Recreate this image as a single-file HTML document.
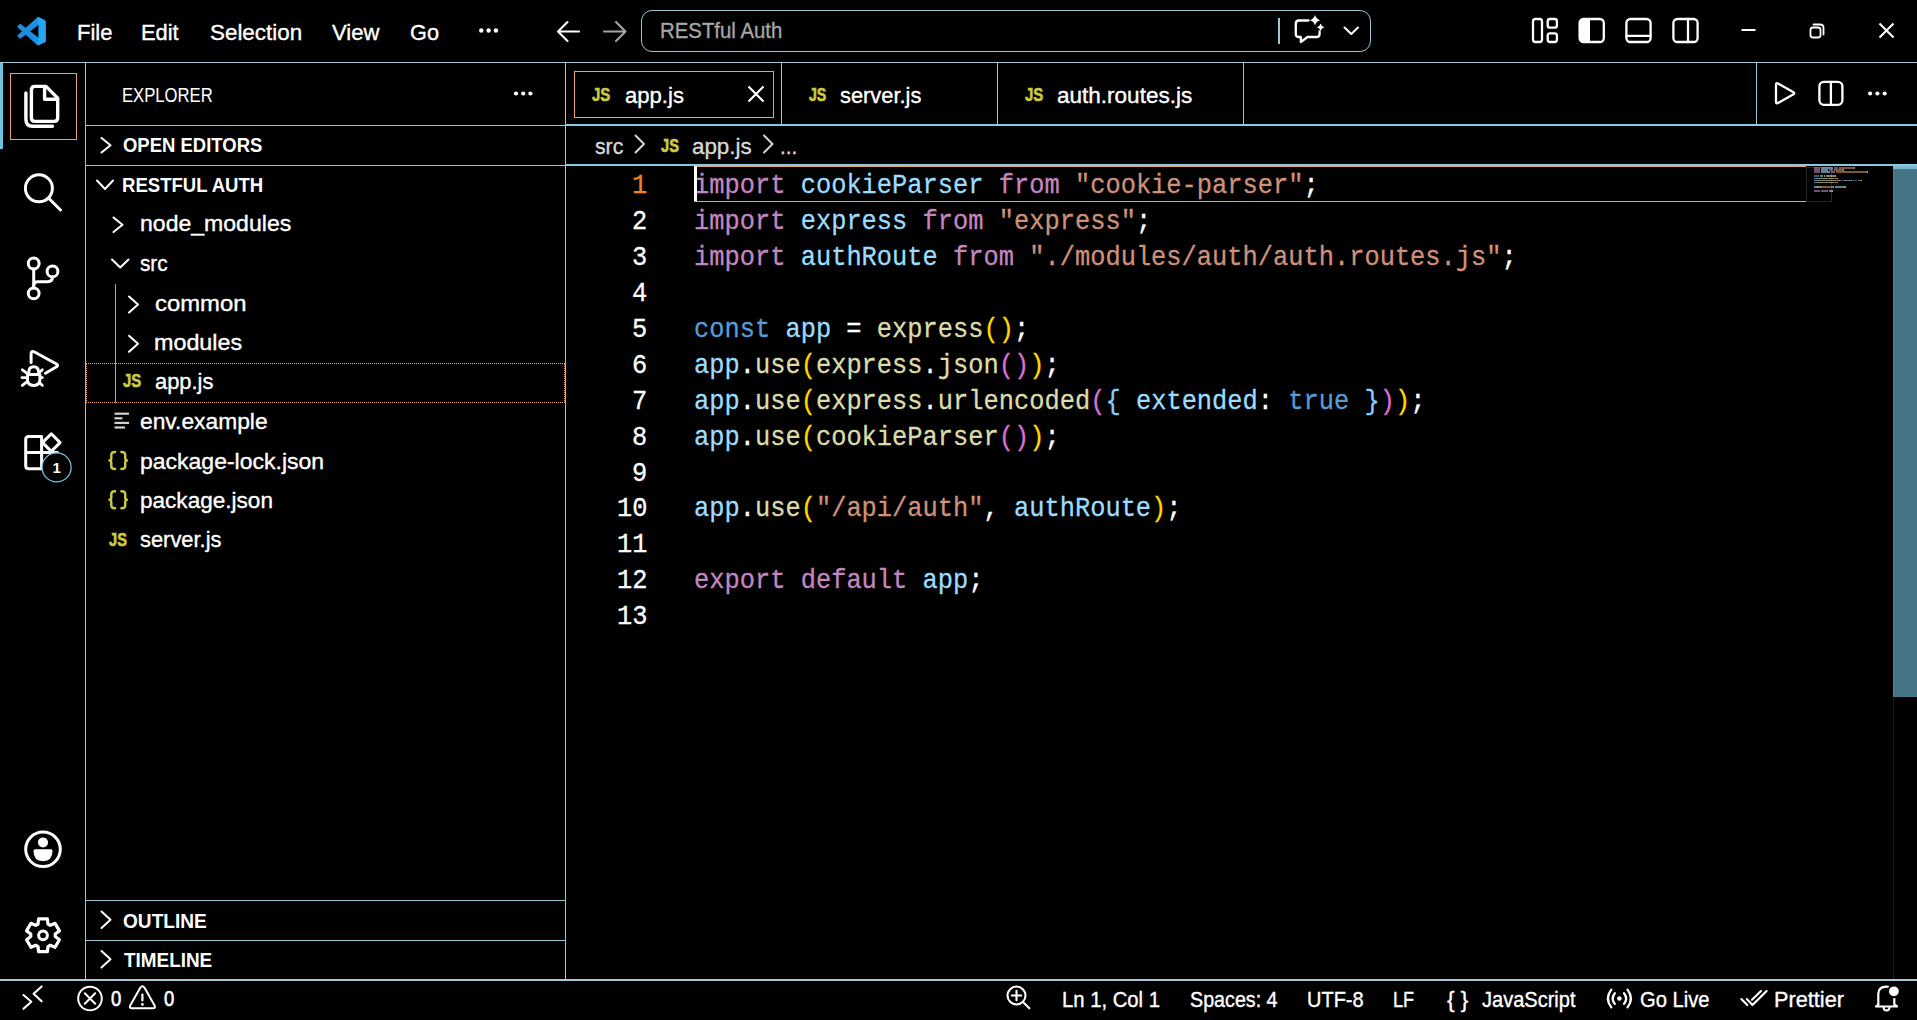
<!DOCTYPE html>
<html><head><meta charset="utf-8"><style>
html,body{margin:0;padding:0;background:#000;width:1917px;height:1020px;overflow:hidden;}
.t{position:absolute;white-space:pre;line-height:0;}
</style></head>
<body>
<div style="position:absolute;left:0px;top:62px;width:1917px;height:1px;background:#9cc6d6;"></div><div class="t" style="left:76.83px;top:32.59px;font-size:22.4px;color:#fff;font-weight:normal;font-family:'Liberation Sans', sans-serif;transform:scaleX(0.9824);transform-origin:0 0;-webkit-text-stroke:0.35px #fff;">File</div><div class="t" style="left:141.43px;top:32.59px;font-size:22.4px;color:#fff;font-weight:normal;font-family:'Liberation Sans', sans-serif;transform:scaleX(0.9763);transform-origin:0 0;-webkit-text-stroke:0.35px #fff;">Edit</div><div class="t" style="left:210.00px;top:32.59px;font-size:22.4px;color:#fff;font-weight:normal;font-family:'Liberation Sans', sans-serif;-webkit-text-stroke:0.35px #fff;">Selection</div><div class="t" style="left:332.40px;top:32.59px;font-size:22.4px;color:#fff;font-weight:normal;font-family:'Liberation Sans', sans-serif;transform:scaleX(0.9857);transform-origin:0 0;-webkit-text-stroke:0.35px #fff;">View</div><div class="t" style="left:410.20px;top:32.59px;font-size:22.4px;color:#fff;font-weight:normal;font-family:'Liberation Sans', sans-serif;transform:scaleX(0.9700);transform-origin:0 0;-webkit-text-stroke:0.35px #fff;">Go</div><div style="position:absolute;left:641px;top:10px;width:730px;height:42px;box-sizing:border-box;border:1px solid #9cc6d6;border-radius:11px;"></div><div class="t" style="left:659.75px;top:31.29px;font-size:22.4px;color:#a6a6a6;font-weight:normal;font-family:'Liberation Sans', sans-serif;transform:scaleX(0.9098);transform-origin:0 0;-webkit-text-stroke:0.35px #a6a6a6;">RESTful Auth</div><div style="position:absolute;left:1278px;top:18px;width:2px;height:26px;background:#9cc6d6;"></div><div style="position:absolute;left:85px;top:63px;width:1px;height:916px;background:#9cc6d6;"></div><div style="position:absolute;left:0px;top:63px;width:3px;height:86px;background:#6FC3DF;"></div><div style="position:absolute;left:10px;top:73px;width:67px;height:67px;box-sizing:border-box;border:1px solid #e9a26a;"></div><div style="position:absolute;left:565px;top:63px;width:1px;height:916px;background:#9cc6d6;"></div><div class="t" style="left:122.15px;top:94.99px;font-size:19.5px;color:#fff;font-weight:normal;font-family:'Liberation Sans', sans-serif;transform:scaleX(0.8538);transform-origin:0 0;-webkit-text-stroke-width:0.05px;">EXPLORER</div><div style="position:absolute;left:86px;top:125px;width:479px;height:1px;background:#9cc6d6;"></div><div class="t" style="left:123.00px;top:144.89px;font-size:19.5px;color:#fff;font-weight:bold;font-family:'Liberation Sans', sans-serif;transform:scaleX(0.9476);transform-origin:0 0;">OPEN EDITORS</div><div style="position:absolute;left:86px;top:165px;width:479px;height:1px;background:#9cc6d6;"></div><div class="t" style="left:122.05px;top:185.39px;font-size:19.5px;color:#fff;font-weight:bold;font-family:'Liberation Sans', sans-serif;transform:scaleX(0.9510);transform-origin:0 0;">RESTFUL AUTH</div><div class="t" style="left:140.19px;top:224.49px;font-size:22.4px;color:#fff;font-weight:normal;font-family:'Liberation Sans', sans-serif;transform:scaleX(1.0295);transform-origin:0 0;-webkit-text-stroke:0.35px #fff;">node_modules</div><div class="t" style="left:140.23px;top:263.59px;font-size:22.4px;color:#fff;font-weight:normal;font-family:'Liberation Sans', sans-serif;transform:scaleX(0.9267);transform-origin:0 0;-webkit-text-stroke:0.35px #fff;">src</div><div class="t" style="left:155.00px;top:303.79px;font-size:22.4px;color:#fff;font-weight:normal;font-family:'Liberation Sans', sans-serif;transform:scaleX(1.0659);transform-origin:0 0;-webkit-text-stroke:0.35px #fff;">common</div><div class="t" style="left:153.96px;top:342.89px;font-size:22.4px;color:#fff;font-weight:normal;font-family:'Liberation Sans', sans-serif;transform:scaleX(1.0417);transform-origin:0 0;-webkit-text-stroke:0.35px #fff;">modules</div><div class="t" style="left:155.00px;top:381.99px;font-size:22.4px;color:#fff;font-weight:normal;font-family:'Liberation Sans', sans-serif;transform:scaleX(0.9767);transform-origin:0 0;-webkit-text-stroke:0.35px #fff;">app.js</div><div class="t" style="left:140.39px;top:422.29px;font-size:22.4px;color:#fff;font-weight:normal;font-family:'Liberation Sans', sans-serif;transform:scaleX(1.0184);transform-origin:0 0;-webkit-text-stroke:0.35px #fff;">env.example</div><div class="t" style="left:140.39px;top:461.79px;font-size:22.4px;color:#fff;font-weight:normal;font-family:'Liberation Sans', sans-serif;transform:scaleX(1.0270);transform-origin:0 0;-webkit-text-stroke:0.35px #fff;">package-lock.json</div><div class="t" style="left:140.40px;top:500.89px;font-size:22.4px;color:#fff;font-weight:normal;font-family:'Liberation Sans', sans-serif;transform:scaleX(1.0076);transform-origin:0 0;-webkit-text-stroke:0.35px #fff;">package.json</div><div class="t" style="left:140.41px;top:540.09px;font-size:22.4px;color:#fff;font-weight:normal;font-family:'Liberation Sans', sans-serif;transform:scaleX(0.9771);transform-origin:0 0;-webkit-text-stroke:0.35px #fff;">server.js</div><div style="position:absolute;left:86px;top:363px;width:479px;height:40px;box-sizing:border-box;border:1px dotted #e9a26a;"></div><div style="position:absolute;left:115px;top:284px;width:1px;height:119px;background:#a8a8a8;"></div><div style="position:absolute;left:86px;top:900px;width:479px;height:1px;background:#9cc6d6;"></div><div class="t" style="left:122.60px;top:920.59px;font-size:19.5px;color:#fff;font-weight:bold;font-family:'Liberation Sans', sans-serif;transform:scaleX(0.9788);transform-origin:0 0;">OUTLINE</div><div style="position:absolute;left:86px;top:940px;width:479px;height:1px;background:#9cc6d6;"></div><div class="t" style="left:123.58px;top:959.59px;font-size:19.5px;color:#fff;font-weight:bold;font-family:'Liberation Sans', sans-serif;transform:scaleX(0.9696);transform-origin:0 0;">TIMELINE</div><div style="position:absolute;left:0px;top:979px;width:1917px;height:2px;background:#a0c8dc;"></div><div class="t" style="left:111.19px;top:999.47px;font-size:21.3px;color:#fff;font-weight:normal;font-family:'Liberation Sans', sans-serif;transform:scaleX(0.8667);transform-origin:0 0;-webkit-text-stroke-width:0.6px;">0</div><div class="t" style="left:163.56px;top:999.47px;font-size:21.3px;color:#fff;font-weight:normal;font-family:'Liberation Sans', sans-serif;transform:scaleX(0.8667);transform-origin:0 0;-webkit-text-stroke-width:0.6px;">0</div><div class="t" style="left:1062.44px;top:999.67px;font-size:21.3px;color:#fff;font-weight:normal;font-family:'Liberation Sans', sans-serif;transform:scaleX(0.9510);transform-origin:0 0;-webkit-text-stroke:0.35px #fff;">Ln 1, Col 1</div><div class="t" style="left:1190.42px;top:999.67px;font-size:21.3px;color:#fff;font-weight:normal;font-family:'Liberation Sans', sans-serif;transform:scaleX(0.9245);transform-origin:0 0;-webkit-text-stroke:0.35px #fff;">Spaces: 4</div><div class="t" style="left:1306.84px;top:999.67px;font-size:21.3px;color:#fff;font-weight:normal;font-family:'Liberation Sans', sans-serif;transform:scaleX(0.9383);transform-origin:0 0;-webkit-text-stroke:0.35px #fff;">UTF-8</div><div class="t" style="left:1392.70px;top:999.67px;font-size:21.3px;color:#fff;font-weight:normal;font-family:'Liberation Sans', sans-serif;transform:scaleX(0.8500);transform-origin:0 0;-webkit-text-stroke:0.35px #fff;">LF</div><div class="t" style="left:1482.19px;top:999.67px;font-size:21.3px;color:#fff;font-weight:normal;font-family:'Liberation Sans', sans-serif;transform:scaleX(0.9400);transform-origin:0 0;-webkit-text-stroke:0.35px #fff;">JavaScript</div><div class="t" style="left:1639.83px;top:999.67px;font-size:21.3px;color:#fff;font-weight:normal;font-family:'Liberation Sans', sans-serif;transform:scaleX(0.9466);transform-origin:0 0;-webkit-text-stroke:0.35px #fff;">Go Live</div><div class="t" style="left:1773.59px;top:999.67px;font-size:21.3px;color:#fff;font-weight:normal;font-family:'Liberation Sans', sans-serif;transform:scaleX(1.0191);transform-origin:0 0;-webkit-text-stroke:0.35px #fff;">Prettier</div><div style="position:absolute;left:566px;top:124px;width:1351px;height:2px;background:#86cbe6;"></div><div style="position:absolute;left:781px;top:63px;width:1px;height:61px;background:#9cc6d6;"></div><div style="position:absolute;left:997px;top:63px;width:1px;height:61px;background:#9cc6d6;"></div><div style="position:absolute;left:1243px;top:63px;width:1px;height:61px;background:#9cc6d6;"></div><div style="position:absolute;left:1756px;top:63px;width:1px;height:61px;background:#9cc6d6;"></div><div style="position:absolute;left:574px;top:71px;width:200px;height:47px;box-sizing:border-box;border:1px solid #e9a26a;"></div><div class="t" style="left:624.60px;top:96.09px;font-size:22.4px;color:#fff;font-weight:normal;font-family:'Liberation Sans', sans-serif;transform:scaleX(0.9867);transform-origin:0 0;-webkit-text-stroke:0.35px #fff;">app.js</div><div class="t" style="left:840.01px;top:96.09px;font-size:22.4px;color:#fff;font-weight:normal;font-family:'Liberation Sans', sans-serif;transform:scaleX(0.9759);transform-origin:0 0;-webkit-text-stroke:0.35px #fff;">server.js</div><div class="t" style="left:1056.60px;top:96.09px;font-size:22.4px;color:#fff;font-weight:normal;font-family:'Liberation Sans', sans-serif;transform:scaleX(1.0059);transform-origin:0 0;-webkit-text-stroke:0.35px #fff;">auth.routes.js</div><div class="t" style="left:595.22px;top:146.59px;font-size:22.4px;color:#d9d9d9;font-weight:normal;font-family:'Liberation Sans', sans-serif;transform:scaleX(0.9483);transform-origin:0 0;-webkit-text-stroke:0.35px #d9d9d9;">src</div><div class="t" style="left:692.40px;top:146.59px;font-size:22.4px;color:#d9d9d9;font-weight:normal;font-family:'Liberation Sans', sans-serif;transform:scaleX(0.9983);transform-origin:0 0;-webkit-text-stroke:0.35px #d9d9d9;">app.js</div><div class="t" style="left:780.10px;top:146.59px;font-size:22.4px;color:#d9d9d9;font-weight:normal;font-family:'Liberation Sans', sans-serif;transform:scaleX(0.9312);transform-origin:0 0;-webkit-text-stroke:0.35px #d9d9d9;">...</div><div style="position:absolute;left:566px;top:164px;width:1351px;height:2px;background:#86cbe6;"></div><div style="position:absolute;left:694px;top:166px;width:1112px;height:1px;background:#e9a26a;"></div><div style="position:absolute;left:694px;top:201px;width:1112px;height:1px;background:#e9a26a;"></div><div class="t" style="left:631.76px;top:185.75px;font-size:27.2px;color:#F38518;font-weight:normal;font-family:'Liberation Mono', monospace;transform:scaleX(0.9338);transform-origin:0 0;-webkit-text-stroke-width:0.3px;">1</div><div class="t" style="left:694.00px;top:185.75px;font-size:27.2px;color:#fff;font-weight:normal;font-family:'Liberation Mono', monospace;transform:scaleX(0.9338);transform-origin:0 0;-webkit-text-stroke-width:0.3px;"><span style="color:#C586C0">import</span><span style="color:#FFFFFF"> </span><span style="color:#9CDCFE">cookieParser</span><span style="color:#FFFFFF"> </span><span style="color:#C586C0">from</span><span style="color:#FFFFFF"> </span><span style="color:#CE9178">"cookie-parser"</span><span style="color:#FFFFFF">;</span></div><div class="t" style="left:631.76px;top:221.72px;font-size:27.2px;color:#FFFFFF;font-weight:normal;font-family:'Liberation Mono', monospace;transform:scaleX(0.9338);transform-origin:0 0;-webkit-text-stroke-width:0.3px;">2</div><div class="t" style="left:694.00px;top:221.72px;font-size:27.2px;color:#fff;font-weight:normal;font-family:'Liberation Mono', monospace;transform:scaleX(0.9338);transform-origin:0 0;-webkit-text-stroke-width:0.3px;"><span style="color:#C586C0">import</span><span style="color:#FFFFFF"> </span><span style="color:#9CDCFE">express</span><span style="color:#FFFFFF"> </span><span style="color:#C586C0">from</span><span style="color:#FFFFFF"> </span><span style="color:#CE9178">"express"</span><span style="color:#FFFFFF">;</span></div><div class="t" style="left:631.76px;top:257.69px;font-size:27.2px;color:#FFFFFF;font-weight:normal;font-family:'Liberation Mono', monospace;transform:scaleX(0.9338);transform-origin:0 0;-webkit-text-stroke-width:0.3px;">3</div><div class="t" style="left:694.00px;top:257.69px;font-size:27.2px;color:#fff;font-weight:normal;font-family:'Liberation Mono', monospace;transform:scaleX(0.9338);transform-origin:0 0;-webkit-text-stroke-width:0.3px;"><span style="color:#C586C0">import</span><span style="color:#FFFFFF"> </span><span style="color:#9CDCFE">authRoute</span><span style="color:#FFFFFF"> </span><span style="color:#C586C0">from</span><span style="color:#FFFFFF"> </span><span style="color:#CE9178">"./modules/auth/auth.routes.js"</span><span style="color:#FFFFFF">;</span></div><div class="t" style="left:631.76px;top:293.66px;font-size:27.2px;color:#FFFFFF;font-weight:normal;font-family:'Liberation Mono', monospace;transform:scaleX(0.9338);transform-origin:0 0;-webkit-text-stroke-width:0.3px;">4</div><div class="t" style="left:631.76px;top:329.63px;font-size:27.2px;color:#FFFFFF;font-weight:normal;font-family:'Liberation Mono', monospace;transform:scaleX(0.9338);transform-origin:0 0;-webkit-text-stroke-width:0.3px;">5</div><div class="t" style="left:694.00px;top:329.63px;font-size:27.2px;color:#fff;font-weight:normal;font-family:'Liberation Mono', monospace;transform:scaleX(0.9338);transform-origin:0 0;-webkit-text-stroke-width:0.3px;"><span style="color:#569CD6">const</span><span style="color:#FFFFFF"> </span><span style="color:#9CDCFE">app</span><span style="color:#FFFFFF"> = </span><span style="color:#DCDCAA">express</span><span style="color:#FFD700">()</span><span style="color:#FFFFFF">;</span></div><div class="t" style="left:631.76px;top:365.60px;font-size:27.2px;color:#FFFFFF;font-weight:normal;font-family:'Liberation Mono', monospace;transform:scaleX(0.9338);transform-origin:0 0;-webkit-text-stroke-width:0.3px;">6</div><div class="t" style="left:694.00px;top:365.60px;font-size:27.2px;color:#fff;font-weight:normal;font-family:'Liberation Mono', monospace;transform:scaleX(0.9338);transform-origin:0 0;-webkit-text-stroke-width:0.3px;"><span style="color:#9CDCFE">app</span><span style="color:#FFFFFF">.</span><span style="color:#DCDCAA">use</span><span style="color:#FFD700">(</span><span style="color:#DCDCAA">express</span><span style="color:#FFFFFF">.</span><span style="color:#DCDCAA">json</span><span style="color:#DA70D6">()</span><span style="color:#FFD700">)</span><span style="color:#FFFFFF">;</span></div><div class="t" style="left:631.76px;top:401.57px;font-size:27.2px;color:#FFFFFF;font-weight:normal;font-family:'Liberation Mono', monospace;transform:scaleX(0.9338);transform-origin:0 0;-webkit-text-stroke-width:0.3px;">7</div><div class="t" style="left:694.00px;top:401.57px;font-size:27.2px;color:#fff;font-weight:normal;font-family:'Liberation Mono', monospace;transform:scaleX(0.9338);transform-origin:0 0;-webkit-text-stroke-width:0.3px;"><span style="color:#9CDCFE">app</span><span style="color:#FFFFFF">.</span><span style="color:#DCDCAA">use</span><span style="color:#FFD700">(</span><span style="color:#DCDCAA">express</span><span style="color:#FFFFFF">.</span><span style="color:#DCDCAA">urlencoded</span><span style="color:#DA70D6">(</span><span style="color:#87CEFA">{</span><span style="color:#FFFFFF"> </span><span style="color:#9CDCFE">extended</span><span style="color:#FFFFFF">:</span><span style="color:#FFFFFF"> </span><span style="color:#569CD6">true</span><span style="color:#FFFFFF"> </span><span style="color:#87CEFA">}</span><span style="color:#DA70D6">)</span><span style="color:#FFD700">)</span><span style="color:#FFFFFF">;</span></div><div class="t" style="left:631.76px;top:437.54px;font-size:27.2px;color:#FFFFFF;font-weight:normal;font-family:'Liberation Mono', monospace;transform:scaleX(0.9338);transform-origin:0 0;-webkit-text-stroke-width:0.3px;">8</div><div class="t" style="left:694.00px;top:437.54px;font-size:27.2px;color:#fff;font-weight:normal;font-family:'Liberation Mono', monospace;transform:scaleX(0.9338);transform-origin:0 0;-webkit-text-stroke-width:0.3px;"><span style="color:#9CDCFE">app</span><span style="color:#FFFFFF">.</span><span style="color:#DCDCAA">use</span><span style="color:#FFD700">(</span><span style="color:#DCDCAA">cookieParser</span><span style="color:#DA70D6">()</span><span style="color:#FFD700">)</span><span style="color:#FFFFFF">;</span></div><div class="t" style="left:631.76px;top:473.51px;font-size:27.2px;color:#FFFFFF;font-weight:normal;font-family:'Liberation Mono', monospace;transform:scaleX(0.9338);transform-origin:0 0;-webkit-text-stroke-width:0.3px;">9</div><div class="t" style="left:616.52px;top:509.48px;font-size:27.2px;color:#FFFFFF;font-weight:normal;font-family:'Liberation Mono', monospace;transform:scaleX(0.9338);transform-origin:0 0;-webkit-text-stroke-width:0.3px;">10</div><div class="t" style="left:694.00px;top:509.48px;font-size:27.2px;color:#fff;font-weight:normal;font-family:'Liberation Mono', monospace;transform:scaleX(0.9338);transform-origin:0 0;-webkit-text-stroke-width:0.3px;"><span style="color:#9CDCFE">app</span><span style="color:#FFFFFF">.</span><span style="color:#DCDCAA">use</span><span style="color:#FFD700">(</span><span style="color:#CE9178">"/api/auth"</span><span style="color:#FFFFFF">, </span><span style="color:#9CDCFE">authRoute</span><span style="color:#FFD700">)</span><span style="color:#FFFFFF">;</span></div><div class="t" style="left:616.52px;top:545.45px;font-size:27.2px;color:#FFFFFF;font-weight:normal;font-family:'Liberation Mono', monospace;transform:scaleX(0.9338);transform-origin:0 0;-webkit-text-stroke-width:0.3px;">11</div><div class="t" style="left:616.52px;top:581.42px;font-size:27.2px;color:#FFFFFF;font-weight:normal;font-family:'Liberation Mono', monospace;transform:scaleX(0.9338);transform-origin:0 0;-webkit-text-stroke-width:0.3px;">12</div><div class="t" style="left:694.00px;top:581.42px;font-size:27.2px;color:#fff;font-weight:normal;font-family:'Liberation Mono', monospace;transform:scaleX(0.9338);transform-origin:0 0;-webkit-text-stroke-width:0.3px;"><span style="color:#C586C0">export</span><span style="color:#FFFFFF"> </span><span style="color:#C586C0">default</span><span style="color:#FFFFFF"> </span><span style="color:#9CDCFE">app</span><span style="color:#FFFFFF">;</span></div><div class="t" style="left:616.52px;top:617.39px;font-size:27.2px;color:#FFFFFF;font-weight:normal;font-family:'Liberation Mono', monospace;transform:scaleX(0.9338);transform-origin:0 0;-webkit-text-stroke-width:0.3px;">13</div><div style="position:absolute;left:694px;top:166px;width:3px;height:35px;background:#ffffff;"></div><div style="position:absolute;left:1893px;top:167px;width:24px;height:530px;background:#457688;"></div><div style="position:absolute;left:1893px;top:167px;width:1px;height:530px;background:#5b7f8e;"></div><div style="position:absolute;left:1893px;top:697px;width:1px;height:282px;background:#1c1c1c;"></div><div style="position:absolute;left:1893px;top:166px;width:24px;height:3px;background:#7fb8cc;"></div><div style="position:absolute;left:1806px;top:167px;width:26px;height:35px;background:transparent;box-sizing:border-box;border:1px solid #262626;"></div><div style="position:absolute;left:1814.0px;top:167.0px;width:6.0px;height:1.8px;background:#C586C0;opacity:0.6;"></div><div style="position:absolute;left:1821.0px;top:167.0px;width:12.0px;height:1.8px;background:#9CDCFE;opacity:0.6;"></div><div style="position:absolute;left:1834.0px;top:167.0px;width:4.0px;height:1.8px;background:#C586C0;opacity:0.6;"></div><div style="position:absolute;left:1839.0px;top:167.0px;width:15.0px;height:1.8px;background:#CE9178;opacity:0.6;"></div><div style="position:absolute;left:1854.0px;top:167.0px;width:1.0px;height:1.8px;background:#FFFFFF;opacity:0.6;"></div><div style="position:absolute;left:1814.0px;top:169.1px;width:6.0px;height:1.8px;background:#C586C0;opacity:0.6;"></div><div style="position:absolute;left:1821.0px;top:169.1px;width:7.0px;height:1.8px;background:#9CDCFE;opacity:0.6;"></div><div style="position:absolute;left:1829.0px;top:169.1px;width:4.0px;height:1.8px;background:#C586C0;opacity:0.6;"></div><div style="position:absolute;left:1834.0px;top:169.1px;width:9.0px;height:1.8px;background:#CE9178;opacity:0.6;"></div><div style="position:absolute;left:1843.0px;top:169.1px;width:1.0px;height:1.8px;background:#FFFFFF;opacity:0.6;"></div><div style="position:absolute;left:1814.0px;top:171.2px;width:6.0px;height:1.8px;background:#C586C0;opacity:0.6;"></div><div style="position:absolute;left:1821.0px;top:171.2px;width:9.0px;height:1.8px;background:#9CDCFE;opacity:0.6;"></div><div style="position:absolute;left:1831.0px;top:171.2px;width:4.0px;height:1.8px;background:#C586C0;opacity:0.6;"></div><div style="position:absolute;left:1836.0px;top:171.2px;width:31.0px;height:1.8px;background:#CE9178;opacity:0.6;"></div><div style="position:absolute;left:1867.0px;top:171.2px;width:1.0px;height:1.8px;background:#FFFFFF;opacity:0.6;"></div><div style="position:absolute;left:1814.0px;top:175.4px;width:5.0px;height:1.8px;background:#569CD6;opacity:0.6;"></div><div style="position:absolute;left:1820.0px;top:175.4px;width:3.0px;height:1.8px;background:#9CDCFE;opacity:0.6;"></div><div style="position:absolute;left:1824.0px;top:175.4px;width:1.0px;height:1.8px;background:#FFFFFF;opacity:0.6;"></div><div style="position:absolute;left:1826.0px;top:175.4px;width:7.0px;height:1.8px;background:#DCDCAA;opacity:0.6;"></div><div style="position:absolute;left:1833.0px;top:175.4px;width:2.0px;height:1.8px;background:#FFD700;opacity:0.6;"></div><div style="position:absolute;left:1835.0px;top:175.4px;width:1.0px;height:1.8px;background:#FFFFFF;opacity:0.6;"></div><div style="position:absolute;left:1814.0px;top:177.5px;width:3.0px;height:1.8px;background:#9CDCFE;opacity:0.6;"></div><div style="position:absolute;left:1817.0px;top:177.5px;width:1.0px;height:1.8px;background:#FFFFFF;opacity:0.6;"></div><div style="position:absolute;left:1818.0px;top:177.5px;width:3.0px;height:1.8px;background:#DCDCAA;opacity:0.6;"></div><div style="position:absolute;left:1821.0px;top:177.5px;width:1.0px;height:1.8px;background:#FFD700;opacity:0.6;"></div><div style="position:absolute;left:1822.0px;top:177.5px;width:7.0px;height:1.8px;background:#DCDCAA;opacity:0.6;"></div><div style="position:absolute;left:1829.0px;top:177.5px;width:1.0px;height:1.8px;background:#FFFFFF;opacity:0.6;"></div><div style="position:absolute;left:1830.0px;top:177.5px;width:4.0px;height:1.8px;background:#DCDCAA;opacity:0.6;"></div><div style="position:absolute;left:1834.0px;top:177.5px;width:2.0px;height:1.8px;background:#DA70D6;opacity:0.6;"></div><div style="position:absolute;left:1836.0px;top:177.5px;width:1.0px;height:1.8px;background:#FFD700;opacity:0.6;"></div><div style="position:absolute;left:1837.0px;top:177.5px;width:1.0px;height:1.8px;background:#FFFFFF;opacity:0.6;"></div><div style="position:absolute;left:1814.0px;top:179.6px;width:3.0px;height:1.8px;background:#9CDCFE;opacity:0.6;"></div><div style="position:absolute;left:1817.0px;top:179.6px;width:1.0px;height:1.8px;background:#FFFFFF;opacity:0.6;"></div><div style="position:absolute;left:1818.0px;top:179.6px;width:3.0px;height:1.8px;background:#DCDCAA;opacity:0.6;"></div><div style="position:absolute;left:1821.0px;top:179.6px;width:1.0px;height:1.8px;background:#FFD700;opacity:0.6;"></div><div style="position:absolute;left:1822.0px;top:179.6px;width:7.0px;height:1.8px;background:#DCDCAA;opacity:0.6;"></div><div style="position:absolute;left:1829.0px;top:179.6px;width:1.0px;height:1.8px;background:#FFFFFF;opacity:0.6;"></div><div style="position:absolute;left:1830.0px;top:179.6px;width:10.0px;height:1.8px;background:#DCDCAA;opacity:0.6;"></div><div style="position:absolute;left:1840.0px;top:179.6px;width:1.0px;height:1.8px;background:#DA70D6;opacity:0.6;"></div><div style="position:absolute;left:1841.0px;top:179.6px;width:1.0px;height:1.8px;background:#87CEFA;opacity:0.6;"></div><div style="position:absolute;left:1843.0px;top:179.6px;width:8.0px;height:1.8px;background:#9CDCFE;opacity:0.6;"></div><div style="position:absolute;left:1851.0px;top:179.6px;width:1.0px;height:1.8px;background:#FFFFFF;opacity:0.6;"></div><div style="position:absolute;left:1853.0px;top:179.6px;width:4.0px;height:1.8px;background:#569CD6;opacity:0.6;"></div><div style="position:absolute;left:1858.0px;top:179.6px;width:1.0px;height:1.8px;background:#87CEFA;opacity:0.6;"></div><div style="position:absolute;left:1859.0px;top:179.6px;width:1.0px;height:1.8px;background:#DA70D6;opacity:0.6;"></div><div style="position:absolute;left:1860.0px;top:179.6px;width:1.0px;height:1.8px;background:#FFD700;opacity:0.6;"></div><div style="position:absolute;left:1861.0px;top:179.6px;width:1.0px;height:1.8px;background:#FFFFFF;opacity:0.6;"></div><div style="position:absolute;left:1814.0px;top:181.7px;width:3.0px;height:1.8px;background:#9CDCFE;opacity:0.6;"></div><div style="position:absolute;left:1817.0px;top:181.7px;width:1.0px;height:1.8px;background:#FFFFFF;opacity:0.6;"></div><div style="position:absolute;left:1818.0px;top:181.7px;width:3.0px;height:1.8px;background:#DCDCAA;opacity:0.6;"></div><div style="position:absolute;left:1821.0px;top:181.7px;width:1.0px;height:1.8px;background:#FFD700;opacity:0.6;"></div><div style="position:absolute;left:1822.0px;top:181.7px;width:12.0px;height:1.8px;background:#DCDCAA;opacity:0.6;"></div><div style="position:absolute;left:1834.0px;top:181.7px;width:2.0px;height:1.8px;background:#DA70D6;opacity:0.6;"></div><div style="position:absolute;left:1836.0px;top:181.7px;width:1.0px;height:1.8px;background:#FFD700;opacity:0.6;"></div><div style="position:absolute;left:1837.0px;top:181.7px;width:1.0px;height:1.8px;background:#FFFFFF;opacity:0.6;"></div><div style="position:absolute;left:1814.0px;top:185.9px;width:3.0px;height:1.8px;background:#9CDCFE;opacity:0.6;"></div><div style="position:absolute;left:1817.0px;top:185.9px;width:1.0px;height:1.8px;background:#FFFFFF;opacity:0.6;"></div><div style="position:absolute;left:1818.0px;top:185.9px;width:3.0px;height:1.8px;background:#DCDCAA;opacity:0.6;"></div><div style="position:absolute;left:1821.0px;top:185.9px;width:1.0px;height:1.8px;background:#FFD700;opacity:0.6;"></div><div style="position:absolute;left:1822.0px;top:185.9px;width:11.0px;height:1.8px;background:#CE9178;opacity:0.6;"></div><div style="position:absolute;left:1833.0px;top:185.9px;width:1.0px;height:1.8px;background:#FFFFFF;opacity:0.6;"></div><div style="position:absolute;left:1835.0px;top:185.9px;width:9.0px;height:1.8px;background:#9CDCFE;opacity:0.6;"></div><div style="position:absolute;left:1844.0px;top:185.9px;width:1.0px;height:1.8px;background:#FFD700;opacity:0.6;"></div><div style="position:absolute;left:1845.0px;top:185.9px;width:1.0px;height:1.8px;background:#FFFFFF;opacity:0.6;"></div><div style="position:absolute;left:1814.0px;top:190.1px;width:6.0px;height:1.8px;background:#C586C0;opacity:0.6;"></div><div style="position:absolute;left:1821.0px;top:190.1px;width:7.0px;height:1.8px;background:#C586C0;opacity:0.6;"></div><div style="position:absolute;left:1829.0px;top:190.1px;width:3.0px;height:1.8px;background:#9CDCFE;opacity:0.6;"></div><div style="position:absolute;left:1832.0px;top:190.1px;width:1.0px;height:1.8px;background:#FFFFFF;opacity:0.6;"></div><div class="t" style="left:592.36px;top:94.97px;font-size:18.4px;color:#cbcb41;font-weight:bold;font-family:'Liberation Sans', sans-serif;transform:scaleX(0.8130);transform-origin:0 0;-webkit-text-stroke-width:0.6px;">JS</div><div class="t" style="left:809.00px;top:94.97px;font-size:18.4px;color:#cbcb41;font-weight:bold;font-family:'Liberation Sans', sans-serif;transform:scaleX(0.7696);transform-origin:0 0;-webkit-text-stroke-width:0.6px;">JS</div><div class="t" style="left:1024.54px;top:94.97px;font-size:18.4px;color:#cbcb41;font-weight:bold;font-family:'Liberation Sans', sans-serif;transform:scaleX(0.8130);transform-origin:0 0;-webkit-text-stroke-width:0.6px;">JS</div><div class="t" style="left:661.00px;top:145.77px;font-size:18.4px;color:#cbcb41;font-weight:bold;font-family:'Liberation Sans', sans-serif;transform:scaleX(0.7957);transform-origin:0 0;-webkit-text-stroke-width:0.6px;">JS</div><div class="t" style="left:123.00px;top:381.37px;font-size:18.4px;color:#cbcb41;font-weight:bold;font-family:'Liberation Sans', sans-serif;transform:scaleX(0.8087);transform-origin:0 0;-webkit-text-stroke-width:0.6px;">JS</div><div class="t" style="left:109.00px;top:539.77px;font-size:18.4px;color:#cbcb41;font-weight:bold;font-family:'Liberation Sans', sans-serif;transform:scaleX(0.7957);transform-origin:0 0;-webkit-text-stroke-width:0.6px;">JS</div><div class="t" style="left:1446.65px;top:999.67px;font-size:21.3px;color:#fff;font-weight:normal;font-family:'Liberation Sans', sans-serif;transform:scaleX(1.0619);transform-origin:0 0;-webkit-text-stroke:0.35px #fff;">{ }</div>
<svg width="1917" height="1020" style="position:absolute;left:0;top:0" stroke-linecap="round" stroke-linejoin="round">
<g transform="translate(17.4,17.1) scale(0.283)"><path d="M70.9119 99.3171C72.4869 99.9307 74.2828 99.8914 75.8725 99.1264L96.4608 89.2197C98.6242 88.1787 100 85.9892 100 83.5872V16.4133C100 14.0113 98.6243 11.8218 96.4609 10.7808L75.8725 0.873756C73.7862 -0.130129 71.3446 0.11576 69.5135 1.44695C69.252 1.63711 69.0028 1.84943 68.769 2.08341L29.3551 38.0415L12.1872 25.0096C10.589 23.7965 8.35363 23.8959 6.86933 25.2461L1.36303 30.2549C-0.452552 31.9064 -0.454633 34.7627 1.35853 36.417L16.2471 50.0001L1.35853 63.5832C-0.454633 65.2374 -0.452552 68.0938 1.36303 69.7453L6.86933 74.7541C8.35363 76.1043 10.589 76.2037 12.1872 74.9905L29.3551 61.9587L68.769 97.9167C69.3925 98.5406 70.1246 99.0104 70.9119 99.3171ZM75.0152 27.2989L45.1091 50.0001L75.0152 72.7012V27.2989Z" fill="#1b8ee0" fill-rule="evenodd"/><path d="M70.9 99.3 L96.46 89.2 C98.6 88.2 100 86 100 83.6 V16.4 C100 14 98.6 11.8 96.46 10.8 L75.87 0.87 C73.8 -0.13 71.3 0.1 69.5 1.4 L75 27.3 V72.7 Z" fill="#24a6f2"/></g><circle cx="481.30" cy="30.5" r="2.2" fill="#fff"/><circle cx="488.60" cy="30.5" r="2.2" fill="#fff"/><circle cx="495.90" cy="30.5" r="2.2" fill="#fff"/><path d="M558,31.5 H579 M567.5,22 L558,31.5 L567.5,41" fill="none" stroke="#fff" stroke-width="2.1" /><path d="M604,31.5 H625.5 M616,22 L625.5,31.5 L616,41" fill="none" stroke="#a6a6a6" stroke-width="2.1" /><path d="M1308.5,20.5 H1299 Q1295.8,20.5 1295.8,23.7 V34 Q1295.8,37 1298.8,37 H1300.8 V42 L1307.5,37 H1316.5 Q1319.6,37 1319.6,34 V31.5" fill="none" stroke="#fff" stroke-width="2.3" /><path d="M1315,15.100000000000001 Q1316.144,19.156 1320.2,20.3 Q1316.144,21.444000000000003 1315,25.5 Q1313.856,21.444000000000003 1309.8,20.3 Q1313.856,19.156 1315,15.100000000000001 Z" fill="#fff"/><path d="M1320.6,23.5 Q1321.436,26.464000000000002 1324.3999999999999,27.3 Q1321.436,28.136 1320.6,31.1 Q1319.764,28.136 1316.8,27.3 Q1319.764,26.464000000000002 1320.6,23.5 Z" fill="#fff"/><path d="M1344.5,27.5 L1351.3,34 L1358,27.5" fill="none" stroke="#fff" stroke-width="2" /><rect x="1533" y="19" width="9" height="23" rx="2.5" fill="none" stroke="#fff" stroke-width="2.3"/><rect x="1547.7" y="19" width="9.2" height="8.7" rx="2.3" fill="none" stroke="#fff" stroke-width="2.3"/><rect x="1547.7" y="33.3" width="9.2" height="8.7" rx="2.3" fill="none" stroke="#fff" stroke-width="2.3"/><rect x="1579.6" y="19" width="24.2" height="23" rx="4" fill="none" stroke="#fff" stroke-width="2.3"/><path d="M1583.6,19 H1590 V42 H1583.6 Q1579.6,42 1579.6,38 V23 Q1579.6,19 1583.6,19 Z" fill="#fff"/><rect x="1626.4" y="19" width="24.2" height="23" rx="4" fill="none" stroke="#fff" stroke-width="2.3"/><path d="M1626.4,35.9 H1650.6" fill="none" stroke="#fff" stroke-width="2.3" /><rect x="1673.4" y="19" width="24.2" height="23" rx="4" fill="none" stroke="#fff" stroke-width="2.3"/><path d="M1688,19 V42" fill="none" stroke="#fff" stroke-width="2.3" /><path d="M1741.5,30 H1755.5" fill="none" stroke="#fff" stroke-width="2" stroke-linecap="butt"/><rect x="1810.5" y="27.5" width="10" height="10" rx="2.5" fill="none" stroke="#fff" stroke-width="1.8"/><path d="M1813.5,24.5 H1820 Q1823.5,24.5 1823.5,28 V34.5" fill="none" stroke="#fff" stroke-width="1.8" /><path d="M1879.5,23.5 L1893.5,37.5 M1893.5,23.5 L1879.5,37.5" fill="none" stroke="#fff" stroke-width="2.1" stroke-linecap="butt"/><path d="M25.9,93 V119.5 Q25.9,126.3 32.7,126.3 H52.5" fill="none" stroke="#fff" stroke-width="3.4" /><path d="M31.4,90 Q31.4,86.4 35,86.4 H46 L57.7,98.1 V117.8 Q57.7,121.4 54.1,121.4 H35 Q31.4,121.4 31.4,117.8 Z" fill="none" stroke="#fff" stroke-width="3.4" /><path d="M44.6,86.6 V99.2 H57.5" fill="none" stroke="#fff" stroke-width="3.4" /><circle cx="38.9" cy="188.3" r="13.5" fill="none" stroke="#fff" stroke-width="3"/><path d="M48.7,198.3 L60.5,210" fill="none" stroke="#fff" stroke-width="3" /><circle cx="33.7" cy="263.5" r="5.4" fill="none" stroke="#fff" stroke-width="3"/><circle cx="52.5" cy="271.4" r="5.4" fill="none" stroke="#fff" stroke-width="3"/><circle cx="33.7" cy="293.3" r="5.4" fill="none" stroke="#fff" stroke-width="3"/><path d="M33.7,269 V288" fill="none" stroke="#fff" stroke-width="3" /><path d="M52.5,277 Q52.5,281.8 47,281.8 H38 Q33.7,281.8 33.7,286" fill="none" stroke="#fff" stroke-width="3" /><path d="M31.1,362.5 V354 Q31.1,350.2 34.5,352 L56.5,364 Q58.6,365.4 56.5,366.8 L45.5,373.2" fill="none" stroke="#fff" stroke-width="3" /><path d="M27.5,374.5 H39.9 V379.5 Q39.9,385.4 33.7,385.4 Q27.5,385.4 27.5,379.5 Z" fill="none" stroke="#fff" stroke-width="3" /><path d="M28.8,372.5 Q28.8,366.8 33.7,366.8 Q38.6,366.8 38.6,372.5" fill="none" stroke="#fff" stroke-width="3" /><path d="M22.3,369.8 L26.8,373.2 M21.9,377.6 H26.8 M22.3,385.4 L26.8,381.8 M42.3,369.8 L40.2,371.8 M42.4,377.6 H40.4 M42.3,385.4 L40.2,383.2" fill="none" stroke="#fff" stroke-width="2.8" /><path d="M41.6,436.5 H28.7 Q25.7,436.5 25.7,439.5 V465.8 Q25.7,468.8 28.7,468.8 H57.5 V452.4 H25.7 M41.6,436.5 V468.8" fill="none" stroke="#fff" stroke-width="3" /><path d="M51.3,433.8 L60.1,442.6 L51.3,451.4 L42.5,442.6 Z" fill="none" stroke="#fff" stroke-width="3" /><circle cx="56.6" cy="467.4" r="14.5" fill="#000" stroke="#6FC3DF" stroke-width="1.3"/><text x="56.6" y="472.8" font-family="Liberation Sans, sans-serif" font-weight="bold" font-size="15" fill="#fff" text-anchor="middle">1</text><circle cx="43" cy="849.3" r="17.3" fill="none" stroke="#fff" stroke-width="3"/><circle cx="43" cy="842.4" r="5" fill="#fff"/><path d="M33.5,851 Q33.5,849.3 35.2,849.3 H50.8 Q52.5,849.3 52.5,851 Q52.5,861.2 43,861.2 Q33.5,861.2 33.5,851 Z" fill="#fff"/><path d="M38.00,924.06 L38.60,918.88 L47.40,918.88 L48.00,924.06 L50.23,925.35 L55.02,923.28 L59.42,930.90 L55.23,934.01 L55.23,936.59 L59.42,939.70 L55.02,947.32 L50.23,945.25 L48.00,946.54 L47.40,951.72 L38.60,951.72 L38.00,946.54 L35.77,945.25 L30.98,947.32 L26.58,939.70 L30.77,936.59 L30.77,934.01 L26.58,930.90 L30.98,923.28 L35.77,925.35 Z" fill="none" stroke="#fff" stroke-width="3.2" /><circle cx="43" cy="935.3" r="4.4" fill="none" stroke="#fff" stroke-width="3"/><circle cx="516.00" cy="93.5" r="2.1" fill="#fff"/><circle cx="523.20" cy="93.5" r="2.1" fill="#fff"/><circle cx="530.40" cy="93.5" r="2.1" fill="#fff"/><path d="M101.5,138 L110.5,145.25 L101.5,152.5" fill="none" stroke="#fff" stroke-width="2" /><path d="M97,180.5 L105.0,189 L113,180.5" fill="none" stroke="#fff" stroke-width="2" /><path d="M113.5,217.5 L122.5,224.75 L113.5,232" fill="none" stroke="#fff" stroke-width="2" /><path d="M112,259.5 L120.25,267.5 L128.5,259.5" fill="none" stroke="#fff" stroke-width="2" /><path d="M129,296.5 L138,304.5 L129,312.5" fill="none" stroke="#fff" stroke-width="2" /><path d="M129,335.8 L138,343.8 L129,351.8" fill="none" stroke="#fff" stroke-width="2" /><path d="M101.5,911.5 L110.5,919.75 L101.5,928" fill="none" stroke="#fff" stroke-width="2" /><path d="M101.5,951 L110.5,959.25 L101.5,967.5" fill="none" stroke="#fff" stroke-width="2" /><path d="M114.5,413.7 H129" fill="none" stroke="#d8d8d8" stroke-width="2.1" stroke-linecap="butt"/><path d="M114.5,418.3 H122.4" fill="none" stroke="#d8d8d8" stroke-width="2.1" stroke-linecap="butt"/><path d="M114.5,422.9 H129" fill="none" stroke="#d8d8d8" stroke-width="2.1" stroke-linecap="butt"/><path d="M114.5,427.5 H125" fill="none" stroke="#d8d8d8" stroke-width="2.1" stroke-linecap="butt"/><path d="M115.1,452 Q111.3,452 111.3,454.6 V457.9 Q111.3,460.5 109.5,460.5 Q111.3,460.5 111.3,463.1 V466.4 Q111.3,469 115.1,469" fill="none" stroke="#cbcb41" stroke-width="2.4" /><path d="M121.4,452 Q125.2,452 125.2,454.6 V457.9 Q125.2,460.5 127,460.5 Q125.2,460.5 125.2,463.1 V466.4 Q125.2,469 121.4,469" fill="none" stroke="#cbcb41" stroke-width="2.4" /><path d="M115.1,491.3 Q111.3,491.3 111.3,493.90000000000003 V497.2 Q111.3,499.8 109.5,499.8 Q111.3,499.8 111.3,502.40000000000003 V505.7 Q111.3,508.3 115.1,508.3" fill="none" stroke="#cbcb41" stroke-width="2.4" /><path d="M121.4,491.3 Q125.2,491.3 125.2,493.90000000000003 V497.2 Q125.2,499.8 127,499.8 Q125.2,499.8 125.2,502.40000000000003 V505.7 Q125.2,508.3 121.4,508.3" fill="none" stroke="#cbcb41" stroke-width="2.4" /><path d="M748.5,86.5 L763.5,101.5 M763.5,86.5 L748.5,101.5" fill="none" stroke="#fff" stroke-width="2.2" stroke-linecap="butt"/><path d="M1776,84.5 Q1776,82.5 1778,83.5 L1793.5,92.3 Q1795,93.3 1793.5,94.3 L1778,103 Q1776,104 1776,102 Z" fill="none" stroke="#fff" stroke-width="2.3" /><rect x="1819.4" y="81.8" width="23" height="23" rx="4.5" fill="none" stroke="#fff" stroke-width="2.3"/><path d="M1830.9,81.8 V104.8" fill="none" stroke="#fff" stroke-width="2.3" /><circle cx="1870.10" cy="93.5" r="2.1" fill="#fff"/><circle cx="1877.40" cy="93.5" r="2.1" fill="#fff"/><circle cx="1884.70" cy="93.5" r="2.1" fill="#fff"/><path d="M635.5,135.5 L644,144 L635.5,152.5" fill="none" stroke="#d9d9d9" stroke-width="1.9" /><path d="M764,135.5 L772.5,144 L764,152.5" fill="none" stroke="#d9d9d9" stroke-width="1.9" /><path d="M23.5,995 L31.3,1001.8 L23.5,1008.8 M41.6,986.5 L33.6,993.8 L41.6,1001.3" fill="none" stroke="#fff" stroke-width="2.1" /><circle cx="90" cy="998.5" r="11.8" fill="none" stroke="#fff" stroke-width="2"/><path d="M84.8,993.3 L95.2,1003.7 M95.2,993.3 L84.8,1003.7" fill="none" stroke="#fff" stroke-width="2" /><path d="M140.4,987.5 Q142.4,985 144.4,987.5 L154.6,1005.5 Q155.8,1008.3 152.8,1008.3 H132 Q129,1008.3 130.2,1005.5 Z" fill="none" stroke="#fff" stroke-width="2" /><path d="M142.4,994.5 V1000.5" fill="none" stroke="#fff" stroke-width="2.2" /><circle cx="142.4" cy="1004.4" r="1.4" fill="#fff"/><circle cx="1016.5" cy="995.5" r="9" fill="none" stroke="#fff" stroke-width="2.1"/><path d="M1023,1002 L1029.3,1008.3 M1016.5,990.8 V1000.2 M1011.8,995.5 H1021.2" fill="none" stroke="#fff" stroke-width="2.1" /><circle cx="1619.4" cy="998.5" r="2.3" fill="#fff"/><path d="M1614.8,993.2 Q1610.6,998.5 1614.8,1003.9 M1624,993.2 Q1628.2,998.5 1624,1003.9" fill="none" stroke="#fff" stroke-width="2.3" /><path d="M1611.3,989.6 Q1604.5,998.5 1611.3,1007.4 M1627.5,989.6 Q1634.3,998.5 1627.5,1007.4" fill="none" stroke="#fff" stroke-width="2.3" /><path d="M1741.3,999 L1747.3,1005 M1746.8,999 L1752.5,1005 L1766.6,990.9 M1752,999.8 L1761,990.9" fill="none" stroke="#fff" stroke-width="2.1" /><path d="M1878.3,1004.5 V994 Q1878.3,986.6 1886.5,986.6 Q1888.5,986.6 1889.5,987" fill="none" stroke="#fff" stroke-width="2.2" /><path d="M1894.3,998.5 V1004.5 L1897,1006.5 H1876 L1878.3,1004.5" fill="none" stroke="#fff" stroke-width="2.2" /><path d="M1883.6,1007.5 Q1883.6,1010.6 1886.5,1010.6 Q1889.4,1010.6 1889.4,1007.5" fill="none" stroke="#fff" stroke-width="2" /><circle cx="1893.9" cy="991.3" r="5.9" fill="#fff" stroke="#000" stroke-width="2"/>
</svg>
</body></html>
